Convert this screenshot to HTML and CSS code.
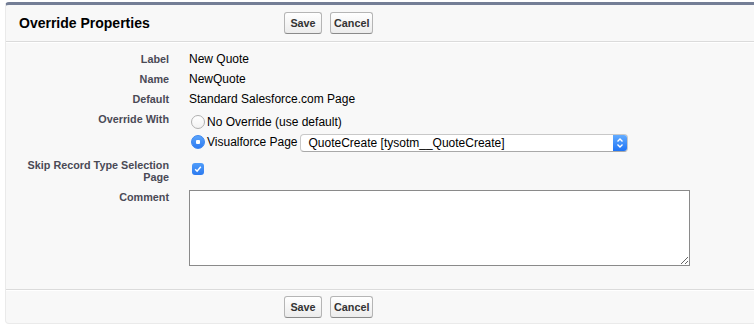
FILE: index.html
```html
<!DOCTYPE html>
<html lang="en">
<head>
<meta charset="utf-8">
<title>Override Properties</title>
<link rel="stylesheet" href="styles.css">
</head>
<body>
<div class="page">
  <div class="panel">
    <div class="pb-header">
      <h2 class="pb-title">Override Properties</h2>
      <div class="pb-buttons">
        <button class="btn" type="button">Save</button>
        <button class="btn" type="button">Cancel</button>
      </div>
    </div>
    <div class="pb-body">
      <div class="row">
        <div class="label-col">Label</div>
        <div class="data-col">New Quote</div>
      </div>
      <div class="row">
        <div class="label-col">Name</div>
        <div class="data-col">NewQuote</div>
      </div>
      <div class="row">
        <div class="label-col">Default</div>
        <div class="data-col">Standard Salesforce.com Page</div>
      </div>
      <div class="row">
        <div class="label-col">Override With</div>
        <div class="data-col">
          <div class="radio-line"><span class="radio"></span><span>No Override (use default)</span></div>
          <div class="radio-line"><span class="radio radio-on"></span><span>Visualforce Page</span>
            <div class="select">
              <span class="select-text">QuoteCreate [tysotm__QuoteCreate]</span>
              <span class="select-arrow">
                <svg width="14" height="18" viewBox="0 0 14 18"><path d="M4.5 7.5 L7 5 L9.5 7.5 M4.5 10.5 L7 13 L9.5 10.5" fill="none" stroke="#fff" stroke-width="1.4"/></svg>
              </span>
            </div>
          </div>
        </div>
      </div>
      <div class="row">
        <div class="label-col">Skip Record Type Selection Page</div>
        <div class="data-col">
          <span class="checkbox">
            <svg width="12" height="12" viewBox="0 0 12 12"><path d="M3.2 6.3 L5.1 8.2 L8.8 3.8" fill="none" stroke="#fff" stroke-width="1.5"/></svg>
          </span>
        </div>
      </div>
      <div class="row">
        <div class="label-col">Comment</div>
        <div class="data-col"><textarea class="comment"></textarea></div>
      </div>
    </div>
    <div class="pb-footer">
      <div class="pb-spacer"></div>
      <div class="pb-buttons">
        <button class="btn" type="button">Save</button>
        <button class="btn" type="button">Cancel</button>
      </div>
    </div>
  </div>
</div>
</body>
</html>
```

FILE: styles.css
```css
html, body {
  margin: 0;
  padding: 0;
  background: #ffffff;
  overflow: hidden;
}

body {
  font-family: "Liberation Sans", Arial, Helvetica, sans-serif;
  color: #000;
}

.page {
  padding: 2px 0 0 5px;
}

.panel {
  width: 780px;
  background: #f8f8f8;
  border: 1px solid #eaeaea;
  border-top: 3px solid #747e96;
  border-radius: 4px;
}

.pb-header {
  display: flex;
  align-items: center;
  height: 36px;
  padding-left: 13px;
  border-bottom: 1px solid #dbdbdb;
}

.pb-title {
  flex: none;
  width: 265px;
  margin: 0;
  font-size: 14px;
  font-weight: bold;
  color: #000;
}

.pb-buttons {
  display: flex;
  gap: 8px;
}

.btn {
  box-sizing: border-box;
  height: 22px;
  min-width: 38px;
  padding: 0 3px;
  margin: 0;
  font-family: "Liberation Sans", Arial, Helvetica, sans-serif;
  font-size: 10.8px;
  font-weight: bold;
  color: #333;
  background: linear-gradient(#ffffff, #ececec);
  border: 1px solid #b5b5b5;
  border-bottom-color: #8a8a8a;
  border-radius: 3px;
}

.pb-body {
  border-top: 1px solid #ffffff;
  padding: 6px 0 20px;
}

.row {
  display: grid;
  grid-template-columns: 173px 1fr;
}

.label-col {
  padding: 4px 10px 4px 2px;
  text-align: right;
  font-size: 10.8px;
  line-height: 12px;
  font-weight: bold;
  color: #4a4a56;
}

.data-col {
  padding: 3px 0 3px 10px;
  font-size: 12px;
  line-height: 14px;
  color: #000;
}

.radio-line {
  display: flex;
  align-items: center;
  height: 20px;
}

.radio {
  box-sizing: border-box;
  width: 14px;
  height: 14px;
  margin: 0 2px 0 2px;
  border-radius: 50%;
  border: 1px solid #b0b0b0;
  background: linear-gradient(#ffffff, #f2f2f2);
  flex: none;
}

.radio-on {
  border-color: #3a86f0;
  background: radial-gradient(circle, #ffffff 0, #ffffff 2px, transparent 2.5px), linear-gradient(#5aa4fb, #2f7cf2);
}

.select {
  box-sizing: border-box;
  display: flex;
  align-items: stretch;
  width: 328px;
  height: 18px;
  margin-left: 2px;
  margin-top: 2px;
  background: #ffffff;
  border: 1px solid #c8c8c8;
  border-bottom-color: #a9a9a9;
  border-radius: 4px;
  overflow: hidden;
}

.select-text {
  flex: 1;
  padding-left: 8px;
  font-size: 12px;
  line-height: 16px;
}

.select-arrow {
  flex: none;
  width: 14px;
  display: flex;
  align-items: center;
  justify-content: center;
  background: linear-gradient(#63acff, #1f74f5);
}

.checkbox {
  display: flex;
  align-items: center;
  justify-content: center;
  width: 12px;
  height: 12px;
  margin: 5px 0 0 3px;
  border-radius: 3px;
  background: linear-gradient(#4f9cfa, #2d7bf0);
}

.comment {
  display: block;
  box-sizing: border-box;
  width: 501px;
  height: 76px;
  margin: 0;
  padding: 2px;
  border: 1px solid #8a8a8a;
  border-radius: 0;
  background: #ffffff;
  font-family: "Liberation Sans", Arial, sans-serif;
  font-size: 12px;
}

.pb-footer {
  display: flex;
  align-items: center;
  height: 33px;
  padding-left: 13px;
  border-top: 1px solid #dbdbdb;
  box-shadow: inset 0 1px 0 #ffffff;
}

.pb-spacer {
  flex: none;
  width: 265px;
}
```
